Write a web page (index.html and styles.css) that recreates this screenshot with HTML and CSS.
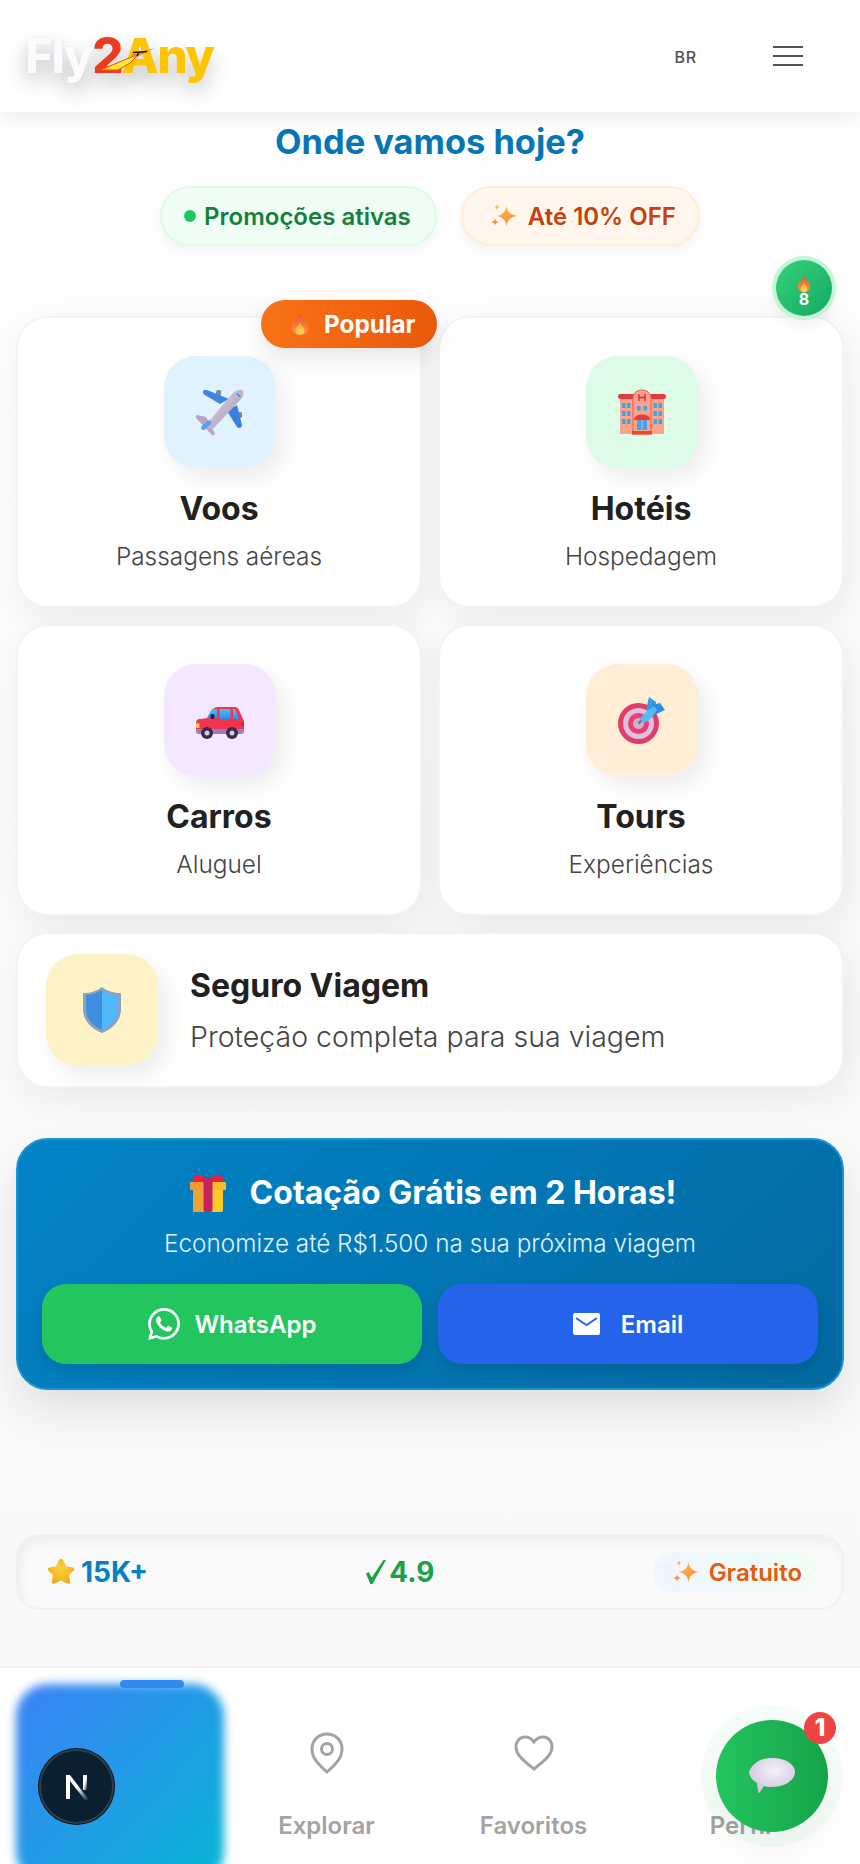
FILE: index.html
```html
<!DOCTYPE html>
<html lang="pt-BR">
<head>
<meta charset="utf-8">
<title>Fly2Any</title>
<link rel="stylesheet" href="styles.css">
</head>
<body>
<svg class="defs" width="0" height="0" aria-hidden="true">
  <defs>
    <linearGradient id="fl" x1="0" y1="0" x2="0" y2="1"><stop offset="0" stop-color="#f0503c"/><stop offset="1" stop-color="#f79a3a"/></linearGradient>
    <linearGradient id="fi" x1="0" y1="0" x2="0" y2="1"><stop offset="0" stop-color="#fb9a3c"/><stop offset="1" stop-color="#ffe14d"/></linearGradient>
    <linearGradient id="sp" x1="0" y1="0" x2="1" y2="1"><stop offset="0" stop-color="#ffc04f"/><stop offset="1" stop-color="#f9803f"/></linearGradient>
    <linearGradient id="fus" x1="0" y1="0" x2="1" y2="1"><stop offset="0" stop-color="#dcd4e2"/><stop offset="1" stop-color="#a996b4"/></linearGradient>
    <linearGradient id="win" x1="0" y1="0" x2="0" y2="1"><stop offset="0" stop-color="#4cc2f8"/><stop offset="1" stop-color="#2b8ee8"/></linearGradient>
    <linearGradient id="sh" x1="0" y1="0" x2="1" y2="0"><stop offset="0.5" stop-color="#3d8fe0"/><stop offset="0.5" stop-color="#4fb8f8"/></linearGradient>
    <radialGradient id="bub" cx="0.55" cy="0.35" r="0.75"><stop offset="0" stop-color="#f5f1fa"/><stop offset="1" stop-color="#c9bedd"/></radialGradient>
    <radialGradient id="str" cx="0.5" cy="0.4" r="0.65"><stop offset="0" stop-color="#fcd535"/><stop offset="1" stop-color="#eea51f"/></radialGradient>
    <symbol id="flame" viewBox="0 0 24 32">
      <path d="M12 1c1 5 3 6 6 10 3 3 5 7 5 10 0 6-5 10-11 10S1 27 1 21c0-4 2-7 3-9 1 1 2 3 3 3 0-5 2-10 5-14z" fill="url(#fl)"/>
      <path d="M12 14c1 3 6 6 6 10 0 4-3 6-6 6s-6-2-6-6c0-4 5-6 6-10z" fill="url(#fi)"/>
    </symbol>
    <symbol id="sparkle" viewBox="0 0 26 24">
      <path d="M15.5 2c1 6 3.500 8.500 10 10-6.500 1.500-9 4-10 10-1-6-3.500-8.500-10-10 6.500-1.500 9-4 10-10z" fill="url(#sp)"/>
      <path d="M6 0c.4 2.200 1 2.800 3 3-2 .4-2.600 1-3 3-.4-2-1-2.600-3-3 2-.2 2.600-.8 3-3z" fill="#fbb45a"/>
      <path d="M4 14c.4 2.600 1.200 3.400 4 4-2.800.6-3.600 1.400-4 4-.4-2.600-1.200-3.400-4-4 2.800-.6 3.600-1.400 4-4z" fill="#f98f4a"/>
    </symbol>
  </defs>
</svg>

<header class="topbar">
  <div class="logo">
    <span class="logo-fly">Fly</span><span class="logo-two">2</span><span class="logo-any">Any</span>
    <svg class="logo-plane" viewBox="0 0 60 26" width="60" height="26" aria-hidden="true">
      <path d="M1 24 L40 8 L31 17 L19 24 Z" fill="#ffe92e" stroke="#f0451c" stroke-width="1"/>
      <path d="M32 9 L56 2 L44 8 L36 12 Z" fill="#f08a1c"/>
      <path d="M34 6.500 L48 5.500 M40 6 L38 10" stroke="#111" stroke-width="1.300" fill="none"/>
    </svg>
  </div>
  <div class="top-actions">
    <span class="lang">BR</span>
    <button class="burger" aria-label="Menu"><span></span><span></span><span></span></button>
  </div>
</header>

<main class="content">
  <h1 class="hero-title">Onde vamos hoje?</h1>
  <div class="pills">
    <span class="pill pill-green"><i class="dot"></i>Promoções ativas</span>
    <span class="pill pill-orange"><svg class="pill-spark"><use href="#sparkle"/></svg>Até 10% OFF</span>
  </div>
  <div class="streak-row">
    <div class="streak">
      <svg class="streak-flame"><use href="#flame"/></svg>
      <span>8</span>
    </div>
  </div>

  <section class="grid">
    <article class="card">
      <span class="popular"><svg class="pop-flame"><use href="#flame"/></svg>Popular</span>
      <div class="icon-box bg-blue">
        <svg viewBox="0 0 48 48" width="48" height="48" aria-hidden="true">
          <rect x="20" y="2" width="5" height="6" rx="1.500" fill="#7d8a96" transform="rotate(10 22 5)"/>
          <rect x="42" y="24" width="4" height="6" rx="1.500" fill="#7d8a96"/>
          <path d="M8 2c-1.500 1-1.500 3 0 4.500L24 16l9-5L11 2z" fill="#3f86e0"/>
          <path d="M31 23l10 16c2 2 5 1 5-2l-5-20z" fill="#3a80de"/>
          <path d="M1 27l9 2 5 8 4 9c-1 1.500-3 1.500-4 0L0 30c-.5-1.500 0-3 1-3z" fill="#b9a3c9"/>
          <path d="M9 38L37 5c3-3 7-4 9-3s2 6-1 9L16 42z" fill="url(#fus)"/>
          <rect x="40" y="6" width="5" height="1.600" fill="#26a6e8" transform="rotate(40 42 7)"/>
          <rect x="4" y="35" width="12" height="4.500" rx="2.200" fill="#5a9cf5" transform="rotate(-42 10 37)"/>
        </svg>
      </div>
      <h2 class="card-title">Voos</h2>
      <p class="card-sub">Passagens aéreas</p>
    </article>

    <article class="card">
      <div class="icon-box bg-green">
        <svg viewBox="0 0 48 48" width="48" height="48" aria-hidden="true">
          <rect x="2" y="8" width="44" height="38" fill="#fba48c"/>
          <rect x="0" y="6" width="48" height="5" rx="2.500" fill="#e23b3f"/>
          <path d="M15 46V10c0-5 4-8 9-8s9 3 9 8v36z" fill="#fba48c" stroke="#ee5a3f" stroke-width="1"/>
          <path d="M21 6v7M27 6v7M21 9.500h6" stroke="#e8213f" stroke-width="1.400" fill="none"/>
          <g fill="#3ea6ee">
            <rect x="4" y="15" width="3.500" height="5"/><rect x="9" y="15" width="3.500" height="5"/>
            <rect x="4" y="23" width="3.500" height="5"/><rect x="9" y="23" width="3.500" height="5"/>
            <rect x="4" y="31" width="3.500" height="5"/><rect x="9" y="31" width="3.500" height="5"/>
            <rect x="35.500" y="15" width="3.500" height="5"/><rect x="40.500" y="15" width="3.500" height="5"/>
            <rect x="35.500" y="23" width="3.500" height="5"/><rect x="40.500" y="23" width="3.500" height="5"/>
            <rect x="35.500" y="31" width="3.500" height="5"/><rect x="40.500" y="31" width="3.500" height="5"/>
            <rect x="19" y="18" width="3.500" height="4.500"/><rect x="25.500" y="18" width="3.500" height="4.500"/>
            <rect x="19" y="32" width="4.500" height="10"/><rect x="24.500" y="32" width="4.500" height="10"/>
          </g>
          <path d="M16 32c0-4 4-5.500 8-5.500s8 1.500 8 5.500z" fill="#e8393c"/>
          <rect x="14" y="43" width="20" height="3.500" fill="#f0452f"/>
        </svg>
      </div>
      <h2 class="card-title">Hotéis</h2>
      <p class="card-sub">Hospedagem</p>
    </article>

    <article class="card">
      <div class="icon-box bg-purple">
        <svg viewBox="0 0 48 48" width="48" height="48" aria-hidden="true">
          <path d="M0 28c0-3 1-5 4-5l8-1 5-9c1-1 2-2 4-2h18c2 0 3 1 4 3l4 9c1 1 1 3 1 5v8H0z" fill="#f0364f"/>
          <path d="M0 33h48v2c0 2-1 3-3 3H3c-2 0-3-1-3-3z" fill="#9b7fb0"/>
          <path d="M11 22l5-9h5v9z" fill="url(#win)"/>
          <rect x="23.500" y="13" width="11" height="10" rx="1" fill="url(#win)"/>
          <path d="M37 13h2l4 10h-6z" fill="url(#win)"/>
          <rect x="14.500" y="18" width="4" height="5" rx="1.500" fill="#1c2640"/>
          <rect x="0" y="27" width="3.500" height="5" rx="1.500" fill="#ffd23c"/>
          <rect x="45" y="26" width="3" height="4" rx="1" fill="#d01f50"/>
          <circle cx="11" cy="37" r="6" fill="#3b2a52"/><circle cx="11" cy="37" r="2.500" fill="#d9cbe4"/>
          <circle cx="36" cy="37" r="6" fill="#3b2a52"/><circle cx="36" cy="37" r="2.500" fill="#d9cbe4"/>
        </svg>
      </div>
      <h2 class="card-title">Carros</h2>
      <p class="card-sub">Aluguel</p>
    </article>

    <article class="card">
      <div class="icon-box bg-amber">
        <svg viewBox="0 0 48 48" width="48" height="48" aria-hidden="true">
          <circle cx="20.500" cy="27.500" r="20.500" fill="#e63a68"/>
          <circle cx="20.500" cy="27.500" r="15.500" fill="#d9c2de"/>
          <circle cx="20.500" cy="27.500" r="10.500" fill="#ee3c73"/>
          <circle cx="20.500" cy="27.500" r="5.500" fill="#c7b4cf"/>
          <path d="M20.500 27.500L30 18" stroke="#7b7a86" stroke-width="2.500"/>
          <path d="M28 14L31 1l7 5v8z" fill="#2f9cea"/>
          <path d="M34 20l13-6-5-7-8 2z" fill="#2b8be6"/>
          <path d="M23 22c1-3 6-7 13-12l3 4c-4 6-8 11-11 12-3 1-6-1-5-4z" fill="#4fbdf2"/>
        </svg>
      </div>
      <h2 class="card-title">Tours</h2>
      <p class="card-sub">Experiências</p>
    </article>

    <article class="card card-wide">
      <div class="icon-box icon-box-wide bg-yellow">
        <svg viewBox="0 0 40 48" width="40" height="48" aria-hidden="true">
          <path d="M20 1c5 4 11 6 18 6 1 0 1 1 1 2v14c0 12-9 20-19 24C10 43 1 35 1 23V9c0-1 0-2 1-2 7 0 13-2 18-6z" fill="#8ea0bb"/>
          <path d="M20 4c5 3 10 5 16 5v14c0 10-7 17-16 21C11 40 4 33 4 23V9c6 0 11-2 16-5z" fill="url(#sh)"/>
        </svg>
      </div>
      <div class="wide-text">
        <h2 class="wide-title">Seguro Viagem</h2>
        <p class="wide-sub">Proteção completa para sua viagem</p>
      </div>
    </article>
  </section>

  <section class="cta">
    <h2 class="cta-title">
      <svg class="gift" viewBox="0 0 36 38" width="36" height="38" aria-hidden="true">
        <path d="M18 7C14 0 4-1 3 4c-1 4 5 6 15 6 10 0 16-2 15-6-1-5-11-4-15 3z" fill="#e8213f"/>
        <rect x="3" y="12" width="30" height="26" rx="2" fill="#fbcb2c"/>
        <rect x="3" y="12" width="15" height="26" rx="2" fill="#f1a133"/>
        <rect x="0" y="8" width="36" height="8" rx="1" fill="#fbb92c"/>
        <rect x="0" y="8" width="14" height="8" rx="1" fill="#f49a30"/>
        <rect x="13.500" y="3" width="9" height="35" rx="2" fill="#c4215f"/>
      </svg>
      Cotação Grátis em 2 Horas!
    </h2>
    <p class="cta-sub">Economize até R$1.500 na sua próxima viagem</p>
    <div class="cta-buttons">
      <a class="btn btn-wa">
        <svg viewBox="0 0 24 24" width="32" height="32" fill="#fff" aria-hidden="true"><path d="M17.472 14.382c-.297-.149-1.758-.867-2.030-.967-.273-.099-.471-.148-.670.150-.197.297-.767.966-.940 1.164-.173.199-.347.223-.644.075-.297-.150-1.255-.463-2.390-1.475-.883-.788-1.480-1.761-1.653-2.059-.173-.297-.018-.458.130-.606.134-.133.298-.347.446-.520.149-.174.198-.298.298-.497.099-.198.050-.371-.025-.520-.075-.149-.669-1.612-.916-2.207-.242-.579-.487-.500-.669-.510-.173-.008-.371-.010-.570-.010-.198 0-.520.074-.792.372-.272.297-1.040 1.016-1.040 2.479 0 1.462 1.065 2.875 1.213 3.074.149.198 2.096 3.200 5.077 4.487.709.306 1.262.489 1.694.625.712.227 1.360.195 1.871.118.571-.085 1.758-.719 2.006-1.413.248-.694.248-1.289.173-1.413-.074-.124-.272-.198-.570-.347m-5.421 7.403h-.004a9.870 9.870 0 01-5.031-1.378l-.361-.214-3.741.982.998-3.648-.235-.374a9.860 9.860 0 01-1.510-5.260c.001-5.450 4.436-9.884 9.888-9.884 2.640 0 5.122 1.030 6.988 2.898a9.825 9.825 0 012.893 6.994c-.003 5.450-4.437 9.884-9.885 9.884m8.413-18.297A11.815 11.815 0 0012.050 0C5.495 0 .160 5.335.157 11.892c0 2.096.547 4.142 1.588 5.945L.057 24l6.305-1.654a11.882 11.882 0 005.683 1.448h.005c6.554 0 11.890-5.335 11.893-11.893a11.821 11.821 0 00-3.480-8.413z"/></svg>
        WhatsApp
      </a>
      <a class="btn btn-mail">
        <svg viewBox="0 0 27 22" width="27" height="22" aria-hidden="true"><rect width="27" height="22" rx="2" fill="#fff"/><path d="M3 5l10.500 7L24 5" fill="none" stroke="#2563eb" stroke-width="2"/></svg>
        Email
      </a>
    </div>
  </section>

  <section class="stats">
    <span class="stat stat-users">
      <svg viewBox="0 0 28 28" width="28" height="28" aria-hidden="true"><path d="M14 1c1 0 2 .6 2.500 2l2.500 5.500 6 .8c2 .3 3 2 1.500 3.500l-4.500 4.200 1.200 6.200c.3 2-1.200 3.200-3 2.300L14 22.500l-6.200 3c-1.800.9-3.300-.3-3-2.300L6 17 1.500 12.800C0 11.300 1 9.600 3 9.300l6-.8L11.500 3C12 1.600 13 1 14 1z" fill="url(#str)"/></svg>
      15K+
    </span>
    <span class="stat stat-rate">
      <svg viewBox="0 0 20 24" width="20" height="24" aria-hidden="true"><path d="M0 13.500l2.600-1.600 3.200 5.600L17.500 0H20L6.500 24H4.300z" fill="#16a34a"/></svg>
      4.9
    </span>
    <span class="stat-free"><svg class="free-spark"><use href="#sparkle"/></svg>Gratuito</span>
  </section>
</main>

<nav class="bottom-nav">
  <div class="nav-item nav-active">
    <span class="active-blur"></span>
    <span class="active-bar"></span>
    <span class="next-badge">
      <svg viewBox="0 0 28 28" width="28" height="28" aria-hidden="true">
        <defs><linearGradient id="nb" x1="0" y1="0" x2="1" y2="1"><stop offset="0.5" stop-color="#fff"/><stop offset="1" stop-color="#fff" stop-opacity="0"/></linearGradient></defs>
        <path d="M3 2h4l19 25h-4L7 8v18H3z" fill="url(#nb)"/>
        <rect x="20" y="2" width="4" height="15" fill="url(#nb)"/>
      </svg>
    </span>
  </div>
  <div class="nav-item">
    <svg class="nav-icon" viewBox="0 0 34 42" width="34" height="42" aria-hidden="true"><path d="M17 40C8 32 2 26 2 17 2 8 9 2 17 2s15 6 15 15c0 9-6 15-15 23z" fill="none" stroke="#a3a3a3" stroke-width="3"/><circle cx="17" cy="17" r="5.500" fill="none" stroke="#a3a3a3" stroke-width="3"/></svg>
    <span class="nav-label">Explorar</span>
  </div>
  <div class="nav-item">
    <svg class="nav-icon" viewBox="0 0 40 36" width="40" height="42" aria-hidden="true"><path d="M20 34C10 26 2 20 2 12 2 6 6 2 11 2c4 0 7 2 9 5 2-3 5-5 9-5 5 0 9 4 9 10 0 8-8 14-18 22z" fill="none" stroke="#a3a3a3" stroke-width="3"/></svg>
    <span class="nav-label">Favoritos</span>
  </div>
  <div class="nav-item">
    <svg class="nav-icon" viewBox="0 0 28 36" width="28" height="36" aria-hidden="true"><circle cx="14" cy="10" r="7" fill="none" stroke="#a3a3a3" stroke-width="3"/></svg>
    <span class="nav-label nav-label-last">Perfil</span>
  </div>
  <button class="chat-fab" aria-label="Chat">
    <svg viewBox="0 0 46 36" width="46" height="36" aria-hidden="true"><path d="M23 0c13 0 23 6 23 14 0 8-10 15-23 15-3 0-5 0-8-1l-4 6c-1 2-2 1-2-1l-1-8C3 22 0 18 0 14 3 6 10 0 23 0z" fill="url(#bub)"/></svg>
    <span class="chat-count">1</span>
  </button>
</nav>
</body>
</html>
```

FILE: styles.css
```css
* { box-sizing: border-box; }
html, body { margin: 0; padding: 0; }
body {
  width: 860px;
  height: 1864px;
  overflow: hidden;
  display: flex;
  flex-direction: column;
  font-family: Inter, "Liberation Sans", sans-serif;
  color: #1f1f1f;
  background: linear-gradient(180deg, #ffffff 0%, #fbfbfb 40%, #f8f8f8 100%);
}
.defs { position: absolute; }

/* Header */
.topbar {
  position: relative;
  z-index: 3;
  flex: none;
  height: 112px;
  background: #fff;
  display: flex;
  align-items: center;
  justify-content: space-between;
  padding: 0 57px 0 25px;
  box-shadow: 0 4px 20px rgba(0, 0, 0, 0.08);
}
.logo {
  position: relative;
  display: flex;
  align-items: baseline;
  font-size: 48px;
  line-height: 56px;
  font-weight: 800;
  letter-spacing: -1.6px;
  margin-top: -1px;
  filter: drop-shadow(0 10px 10px rgba(0, 0, 0, 0.24));
}
.logo-fly { color: #fbfbfe; text-shadow: 0 0 1px #c4c4dc; }
.logo-two { color: #ee3a1f; font-size: 49px; }
.logo-any { color: #fdc400; }
.logo-plane { position: absolute; left: 74px; top: 18px; }
.top-actions { display: flex; align-items: center; gap: 76px; padding-top: 2px; }
.lang { font-size: 16px; font-weight: 500; letter-spacing: 0.8px; color: #525252; }
.burger {
  width: 30px;
  height: 20px;
  padding: 0;
  border: 0;
  background: none;
  display: flex;
  flex-direction: column;
  justify-content: space-between;
  margin-top: -2px;
}
.burger span { display: block; height: 2px; background: #525252; }

/* Hero */
.content { flex: 1; min-height: 0; padding: 0 16px; }
.hero-title {
  margin: 7px 0 0;
  text-align: center;
  font-size: 34.4px;
  line-height: 46px;
  font-weight: 700;
  color: #0476b6;
}
.pills { display: flex; justify-content: center; gap: 24px; margin-top: 21px; }
.pill {
  display: flex;
  align-items: center;
  height: 60px;
  border-radius: 30px;
  font-size: 24px;
  font-weight: 600;
  box-shadow: 0 4px 12px rgba(0, 0, 0, 0.05);
}
.pill-green { background: #f0fdf4; border: 2px solid #dcfce7; color: #15803d; padding: 0 24px 0 22px; }
.pill-orange { background: #fff7ed; border: 2px solid #ffedd5; color: #c2410c; padding: 0 22px 0 28px; }
.dot { width: 12px; height: 12px; border-radius: 50%; background: #22c55e; margin-right: 8px; }
.pill-spark { width: 26px; height: 24px; margin-right: 11px; }

.streak-row { display: flex; justify-content: flex-end; height: 70px; padding-right: 12px; position: relative; z-index: 2; }
.streak {
  width: 56px;
  height: 56px;
  margin-top: 14px;
  border-radius: 50%;
  background: linear-gradient(135deg, #34d27a, #16a864);
  box-shadow: 0 0 0 4px #c6f4d6, 0 8px 16px rgba(0, 0, 0, 0.08);
  display: flex;
  flex-direction: column;
  align-items: center;
  justify-content: center;
  color: #fff;
  font-size: 16px;
  font-weight: 700;
  line-height: 12px;
  padding-top: 4px;
}
.streak-flame { width: 14px; height: 18px; }

/* Cards */
.grid { display: grid; grid-template-columns: 1fr 1fr; gap: 16px; }
.card {
  position: relative;
  height: 292px;
  background: #fff;
  border: 2px solid #f3f3f3;
  border-radius: 32px;
  padding: 38px 0 0;
  display: flex;
  flex-direction: column;
  align-items: center;
  box-shadow: 6px 10px 36px rgba(0, 0, 0, 0.07);
}
.popular {
  position: absolute;
  top: -18px;
  right: -17px;
  z-index: 1;
  width: 176px;
  height: 48px;
  border-radius: 24px;
  background: linear-gradient(90deg, #f97316, #ea580c);
  color: #fff;
  font-size: 24.3px;
  font-weight: 700;
  display: flex;
  align-items: center;
  padding-left: 30px;
  box-shadow: 0 10px 24px rgba(0, 0, 0, 0.1);
}
.pop-flame { width: 18px; height: 24px; margin-right: 15px; }
.icon-box {
  flex: none;
  width: 112px;
  height: 112px;
  border-radius: 32px;
  margin-left: 2px;
  display: flex;
  align-items: center;
  justify-content: center;
  box-shadow: 8px 10px 24px rgba(0, 0, 0, 0.08);
}
.icon-box-wide { margin-left: 0; }
.bg-blue { background: #e0f2fe; }
.bg-green { background: #dcfce7; }
.bg-purple { background: #f3e8ff; }
.bg-amber { background: #ffedd5; }
.bg-yellow { background: #fef3c7; }
.card-title { margin: 21px 0 0; font-size: 32px; line-height: 40px; font-weight: 700; color: #212121; }
.card-sub { margin: 11px 0 0; font-size: 24.4px; line-height: 32px; font-weight: 300; color: #444; }

.card-wide {
  grid-column: 1 / -1;
  height: 156px;
  flex-direction: row;
  padding: 0 0 0 28px;
  gap: 32px;
}
.wide-title { margin: 0; font-size: 32px; line-height: 42px; font-weight: 700; color: #212121; }
.wide-sub { margin: 12px 0 0; font-size: 28.5px; line-height: 36px; font-weight: 300; color: #444; }

/* CTA */
.cta {
  margin-top: 50px;
  height: 252px;
  border: 2px solid #1a93cf;
  border-radius: 32px;
  background: linear-gradient(135deg, #0284c7, #0369a1);
  padding: 31px 24px 0;
  box-shadow: 0 20px 40px rgba(0, 0, 0, 0.1);
  color: #fff;
}
.cta-title {
  margin: 0;
  padding-left: 6px;
  display: flex;
  align-items: center;
  justify-content: center;
  gap: 24px;
  font-size: 32px;
  line-height: 44px;
  font-weight: 700;
}
.cta-sub { margin: 12px 0 0; text-align: center; font-size: 24.3px; line-height: 32px; font-weight: 300; color: #e0f2fe; }
.cta-buttons { display: grid; grid-template-columns: 1fr 1fr; gap: 16px; margin-top: 25px; }
.btn {
  height: 80px;
  border-radius: 24px;
  display: flex;
  align-items: center;
  justify-content: center;
  gap: 15px;
  font-size: 24px;
  font-weight: 600;
  color: #fff;
  box-shadow: 0 6px 14px rgba(0, 0, 0, 0.12);
}
.btn-wa { background: #22c55e; }
.btn-mail { background: #2563eb; gap: 21px; }

/* Stats */
.stats {
  margin-top: 144px;
  height: 76px;
  border: 2px solid #f1f1f1;
  border-radius: 24px;
  background: #fafafa;
  box-shadow: inset 3px 6px 10px rgba(0, 0, 0, 0.05);
  display: flex;
  justify-content: space-between;
  align-items: center;
  padding: 0 24px 0 29px;
  font-size: 28px;
  font-weight: 700;
}
.stat { display: flex; align-items: center; gap: 6px; }
.stat-users { color: #0580c4; }
.stat-rate { color: #16a34a; gap: 3px; }
.stat-free {
  display: flex;
  align-items: center;
  height: 40px;
  padding: 0 16px 0 20px;
  border-radius: 20px;
  background: linear-gradient(90deg, #eff6ff, #f0fdf4);
  color: #ea580c;
  font-size: 24px;
  font-weight: 600;
}
.free-spark { width: 26px; height: 24px; margin-right: 10px; }

/* Bottom nav */
.bottom-nav {
  position: relative;
  flex: none;
  height: 198px;
  background: #fff;
  border-top: 2px solid #f3f3f3;
  display: grid;
  grid-template-columns: repeat(4, 1fr);
  padding: 0 16px;
}
.nav-item {
  position: relative;
  display: flex;
  flex-direction: column;
  align-items: center;
  padding-top: 64px;
}
.nav-icon { flex: none; }
.nav-label { margin-top: 36px; font-size: 24px; line-height: 32px; font-weight: 600; color: #a3a3a3; }
.nav-label-last { margin-top: 42px; }
.active-blur {
  position: absolute;
  left: 0;
  top: 16px;
  width: 208px;
  height: 200px;
  border-radius: 32px;
  background: linear-gradient(135deg, #3b82f6, #06b6d4);
  filter: blur(5px);
}
.active-bar {
  position: absolute;
  left: 104px;
  top: 12px;
  width: 64px;
  height: 8px;
  border-radius: 4px;
  background: #2f8bef;
}
.next-badge {
  position: absolute;
  left: 23px;
  top: 81px;
  width: 75px;
  height: 75px;
  border-radius: 50%;
  background: #0a2030;
  border: 2px solid #2c3e50;
  box-shadow: 0 0 0 1px #111;
  display: flex;
  align-items: center;
  justify-content: center;
}
.chat-fab {
  position: absolute;
  left: 716px;
  top: 52px;
  width: 112px;
  height: 112px;
  padding: 0;
  border: 0;
  border-radius: 50%;
  background: linear-gradient(90deg, #22c55e, #16a34a);
  box-shadow: 0 0 0 15px rgba(34, 197, 94, 0.04), 0 20px 40px rgba(0, 0, 0, 0.05);
  display: flex;
  align-items: center;
  justify-content: center;
}
.chat-count {
  position: absolute;
  right: -8px;
  top: -8px;
  width: 32px;
  height: 32px;
  border-radius: 50%;
  background: #ef4444;
  color: #fff;
  font-family: Inter, sans-serif;
  font-size: 24px;
  font-weight: 800;
  line-height: 32px;
  text-align: center;
}
```
